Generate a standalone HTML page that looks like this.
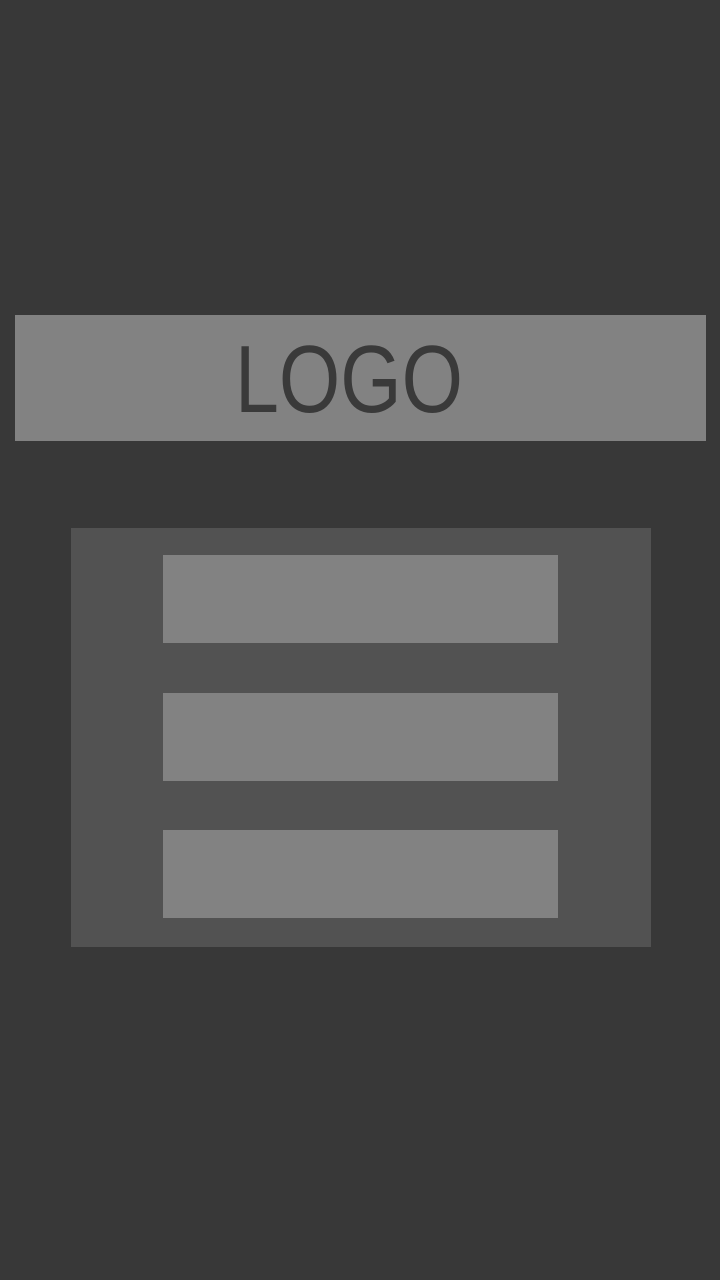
<!DOCTYPE html>
<html><head><meta charset="utf-8"><style>
html,body{margin:0;padding:0;width:720px;height:1280px;background:#383838;overflow:hidden;position:relative}
.bar{position:absolute;left:15px;top:315px;width:691px;height:126px;background:#828282}
.panel{position:absolute;left:71px;top:528px;width:580px;height:419px;background:#525252}
.btn{position:absolute;left:163px;width:395px;height:88px;background:#828282}
svg{position:absolute;left:0;top:0}
</style></head><body>
<div class="bar"></div>
<svg width="720" height="460"><text x="235" y="412" font-family="Liberation Sans, sans-serif" font-size="96" textLength="228" lengthAdjust="spacingAndGlyphs" fill="#3a3a3a">LOGO</text></svg>
<div class="panel"></div>
<div class="btn" style="top:555px"></div>
<div class="btn" style="top:693px"></div>
<div class="btn" style="top:830px"></div>
</body></html>
